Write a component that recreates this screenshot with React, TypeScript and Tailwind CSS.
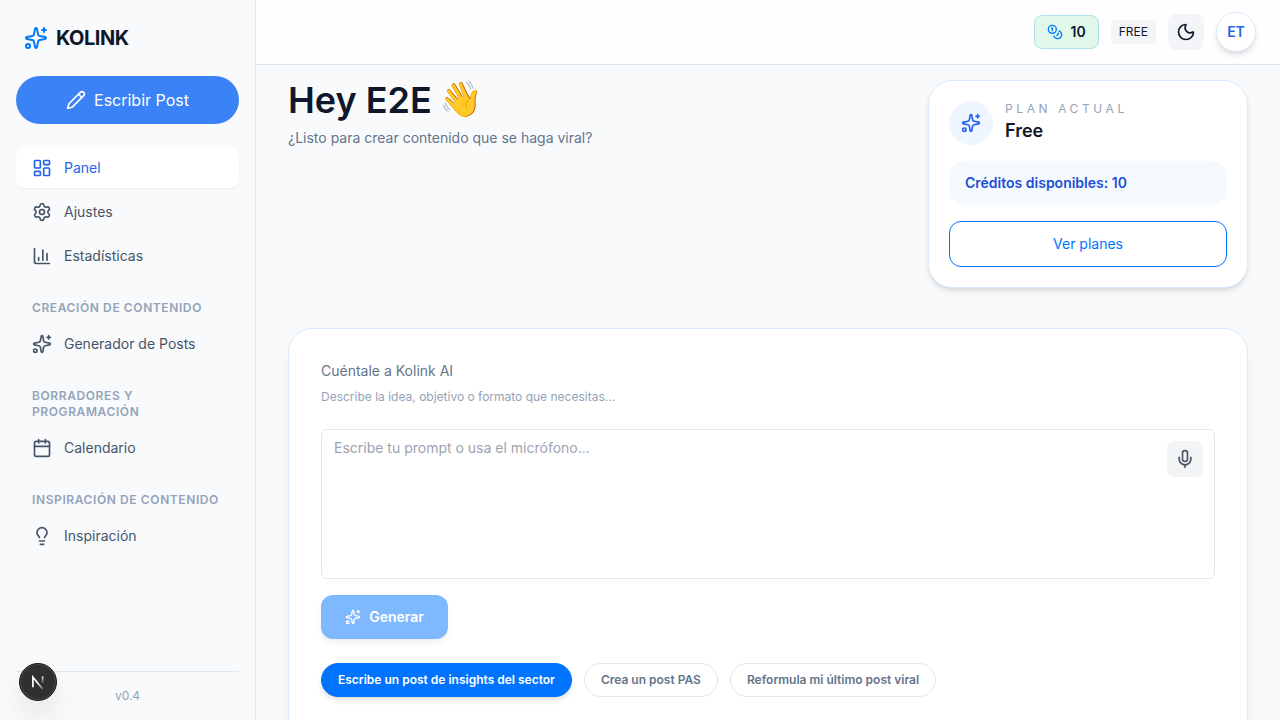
import React from "react";
import {
  Calendar,
  ChartColumn,
  Coins,
  LayoutDashboard,
  Lightbulb,
  Mic,
  Moon,
  Pencil,
  Settings,
  Sparkles,
  type LucideIcon,
} from "lucide-react";

type Item = { label: string; icon: LucideIcon; active?: boolean };
type Section = { title?: string; items: Item[] };

const sections: Section[] = [
  {
    items: [
      { label: "Panel", icon: LayoutDashboard, active: true },
      { label: "Ajustes", icon: Settings },
      { label: "Estadísticas", icon: ChartColumn },
    ],
  },
  { title: "Creación de contenido", items: [{ label: "Generador de Posts", icon: Sparkles }] },
  { title: "Borradores y programación", items: [{ label: "Calendario", icon: Calendar }] },
  { title: "Inspiración de contenido", items: [{ label: "Inspiración", icon: Lightbulb }] },
];

function NavItem({ label, icon: Icon, active }: Item) {
  return (
    <a
      className={
        active
          ? "flex h-10 items-center gap-3 rounded-lg bg-white px-4 text-sm text-[#2563eb] shadow-xs"
          : "flex h-10 items-center gap-3 rounded-lg px-4 text-sm text-[#475569]"
      }
    >
      <Icon className="size-5 shrink-0" />
      {label}
    </a>
  );
}

function Sidebar() {
  return (
    <aside className="flex w-64 shrink-0 flex-col border-r border-[#e2e8f0] bg-[#f8fafc] px-4 pb-4">
      <div className="flex h-[76px] items-center gap-2 px-2">
        <Sparkles className="size-6 text-[#0077ff]" />
        <span className="text-xl font-bold tracking-tight text-[#0f172a]">KOLINK</span>
      </div>
      <button className="flex h-12 shrink-0 items-center justify-center gap-2 rounded-full bg-[#3b82f6] text-base text-white">
        <Pencil className="size-5" />
        Escribir Post
      </button>
      <nav className="mt-6 flex flex-1 flex-col gap-6">
        {sections.map((s) => (
          <div key={s.items[0].label} className="flex flex-col gap-1">
            {s.title && (
              <h3 className="mb-1 px-4 text-xs font-semibold uppercase tracking-wider text-[#94a3b8]">
                {s.title}
              </h3>
            )}
            {s.items.map((i) => (
              <NavItem key={i.label} {...i} />
            ))}
          </div>
        ))}
      </nav>
      <p className="border-t border-[#e2e8f0] pt-4 text-center text-xs text-[#94a3b8]">v0.4</p>
    </aside>
  );
}

function Header() {
  return (
    <header className="flex h-[65px] shrink-0 items-center justify-end gap-3 border-b border-[#dde7f3] bg-[#fefefe] px-6">
      <div className="flex h-[34px] items-center gap-2 rounded-lg border border-[#b2dff0] bg-[#dff8ea] px-3 text-sm font-semibold text-[#0f172a]">
        <Coins className="size-4 text-[#0077ff]" />
        10
      </div>
      <span className="flex h-6 items-center rounded bg-[#f4f5f9] px-2 text-xs text-[#0f172a]">FREE</span>
      <button className="flex size-9 items-center justify-center rounded-lg bg-[#f4f5f9] text-[#0f172a]">
        <Moon className="size-5" />
      </button>
      <button className="flex size-10 items-center justify-center rounded-full border border-[#dbeafe] bg-white text-sm font-semibold text-[#2563eb] shadow-md">
        ET
      </button>
    </header>
  );
}

function PlanCard() {
  return (
    <section className="flex w-80 flex-col gap-4 rounded-3xl border border-[#dbeafe] bg-white p-5 shadow-md">
      <div className="flex items-center gap-3">
        <div className="flex size-11 items-center justify-center rounded-full bg-[#eff6ff] text-[#2563eb]">
          <Sparkles className="size-5" />
        </div>
        <div>
          <p className="text-xs uppercase tracking-[0.3em] text-[#94a3b8]">Plan actual</p>
          <p className="text-lg font-semibold text-[#0f172a]">Free</p>
        </div>
      </div>
      <p className="rounded-2xl bg-[#f5faff] px-4 py-3 text-sm font-semibold text-[#1d4ed8]">
        Créditos disponibles: 10
      </p>
      <button className="h-[46px] rounded-xl border border-[#0073ff] text-sm text-[#0073ff]">
        Ver planes
      </button>
    </section>
  );
}

function Composer() {
  return (
    <section className="mt-10 h-[520px] shrink-0 rounded-3xl border border-[#dbeafe] bg-white p-8 shadow-xl shadow-slate-900/8">
      <h2 className="text-sm text-[#64748b]">Cuéntale a Kolink AI</h2>
      <p className="mt-2 text-xs text-[#94a3b8]">
        Describe la idea, objetivo o formato que necesitas...
      </p>
      <div className="mt-6 flex h-[150px] items-start justify-between rounded-md border border-[#e2e8f0] py-[11px] pr-[11px] pl-3">
        <p className="-mt-[3px] text-sm text-[#9ca3af]">Escribe tu prompt o usa el micrófono...</p>
        <button className="flex size-9 items-center justify-center rounded-lg bg-[#f3f4f6] text-[#4b5563]">
          <Mic className="size-5" />
        </button>
      </div>
      <button className="mt-4 flex h-11 w-[127px] items-center justify-center gap-2 rounded-xl bg-[#0073ff] text-sm font-semibold text-white opacity-50 shadow-md">
        <Sparkles className="size-4" />
        Generar
      </button>
      <div className="mt-6 flex gap-3 text-xs font-semibold text-[#64748b]">
        <button className="h-[34px] rounded-full border border-[#0073ff] bg-[#0073ff] px-4 text-white shadow-md">
          Escribe un post de insights del sector
        </button>
        <button className="h-[34px] rounded-full border border-[#e2e8f0] px-4">Crea un post PAS</button>
        <button className="h-[34px] rounded-full border border-[#e2e8f0] px-4">
          Reformula mi último post viral
        </button>
      </div>
    </section>
  );
}

function DevBadge() {
  return (
    <div className="absolute top-[663px] left-[19px] flex size-[38px] items-center justify-center rounded-full border border-[#1b1b1b] bg-[#303030] shadow-[inset_0_0_0_1px_#4a4a4a,0_16px_32px_-8px_rgba(0,0,0,0.24)]">
      <svg viewBox="0 0 14 14" className="size-[14px]" fill="none" strokeWidth="1.7">
        <defs>
          <linearGradient id="diagonal" x1="7" y1="7" x2="13" y2="14" gradientUnits="userSpaceOnUse">
            <stop stopColor="#fff" />
            <stop offset="1" stopColor="#fff" stopOpacity="0.2" />
          </linearGradient>
          <linearGradient id="stem" x1="12" y1="1" x2="12" y2="9" gradientUnits="userSpaceOnUse">
            <stop stopColor="#fff" />
            <stop offset="1" stopColor="#fff" stopOpacity="0" />
          </linearGradient>
        </defs>
        <path d="M1.9 12.2V2.2l9.8 11.8" stroke="url(#diagonal)" />
        <path d="M11.6 1.4v8.2" stroke="url(#stem)" />
      </svg>
    </div>
  );
}

export default function App() {
  return (
    <div className="relative flex h-[720px] w-[1280px] overflow-hidden bg-[#f8fafc] font-['Inter',sans-serif]">
      <Sidebar />
      <div className="flex min-w-0 flex-1 flex-col">
        <Header />
        <main className="flex flex-1 flex-col overflow-hidden px-8 pt-[15px]">
          <div className="flex shrink-0 items-start justify-between">
            <div>
              <h1 className="flex h-10 items-center gap-[7px] text-4xl font-semibold text-[#0f172a]">
                Hey E2E <span className="-mt-1 text-[35px] leading-none">👋</span>
              </h1>
              <p className="mt-2 text-sm text-[#64748b]">¿Listo para crear contenido que se haga viral?</p>
            </div>
            <PlanCard />
          </div>
          <Composer />
        </main>
      </div>
      <DevBadge />
    </div>
  );
}
